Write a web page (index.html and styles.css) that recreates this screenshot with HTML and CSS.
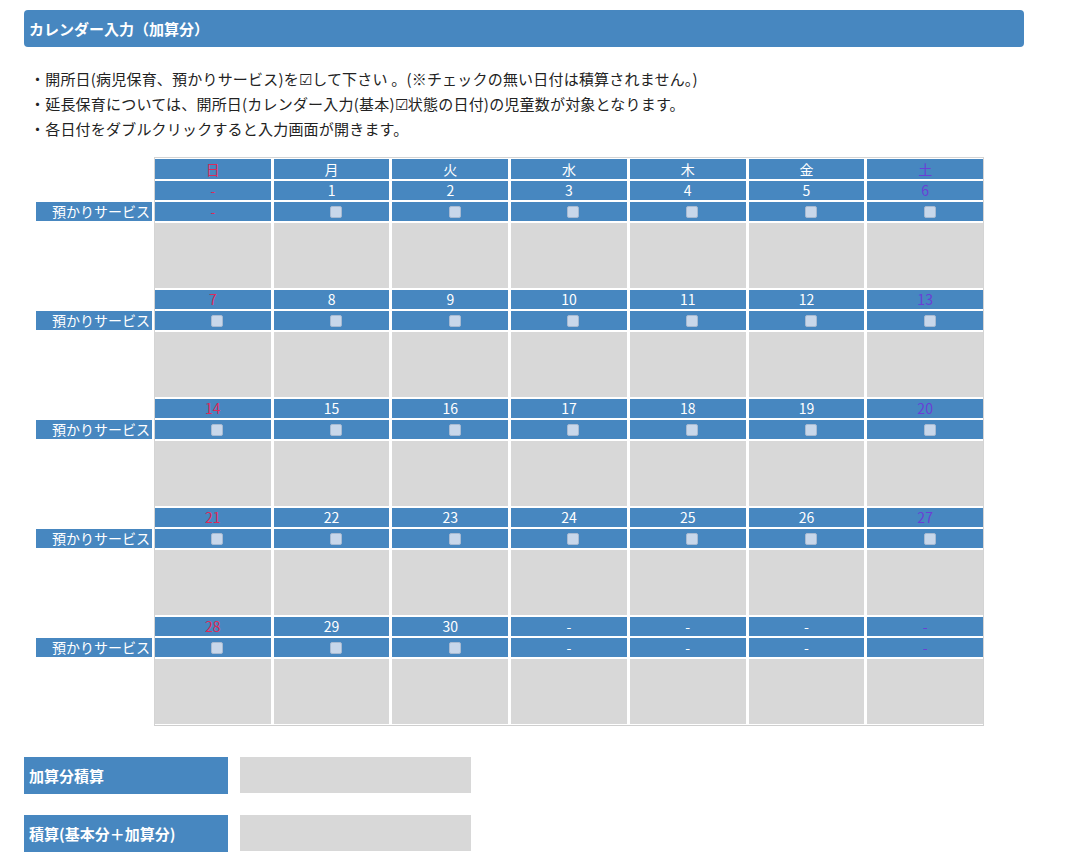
FILE: index.html
```html
<!DOCTYPE html>
<html lang="ja">
<head>
<meta charset="utf-8">
<title>カレンダー入力（加算分）</title>
<link rel="stylesheet" href="styles.css">
</head>
<body>
<div class="page">
  <div class="title">カレンダー入力（加算分）</div>
  <div class="notes">
    <p>・開所日(病児保育、預かりサービス)を☑して下さい 。(※チェックの無い日付は積算されません。)</p>
    <p>・延長保育については、開所日(カレンダー入力(基本)☑状態の日付)の児童数が対象となります。</p>
    <p>・各日付をダブルクリックすると入力画面が開きます。</p>
  </div>
  <div class="cal-wrap">
    <div class="labels">
      <div></div>
      <div></div><div class="lab">預かりサービス</div><div></div>
      <div></div><div class="lab">預かりサービス</div><div></div>
      <div></div><div class="lab">預かりサービス</div><div></div>
      <div></div><div class="lab">預かりサービス</div><div></div>
      <div></div><div class="lab">預かりサービス</div><div></div>
    </div>
    <div class="cal">
      <div class="c sun">日</div><div class="c">月</div><div class="c">火</div><div class="c">水</div><div class="c">木</div><div class="c">金</div><div class="c sat">土</div>

      <div class="c sun">-</div><div class="c">1</div><div class="c">2</div><div class="c">3</div><div class="c">4</div><div class="c">5</div><div class="c sat">6</div>
      <div class="c sun">-</div><div class="c"><span class="cb"></span></div><div class="c"><span class="cb"></span></div><div class="c"><span class="cb"></span></div><div class="c"><span class="cb"></span></div><div class="c"><span class="cb"></span></div><div class="c"><span class="cb"></span></div>
      <div class="g"></div><div class="g"></div><div class="g"></div><div class="g"></div><div class="g"></div><div class="g"></div><div class="g"></div>

      <div class="c sun">7</div><div class="c">8</div><div class="c">9</div><div class="c">10</div><div class="c">11</div><div class="c">12</div><div class="c sat">13</div>
      <div class="c"><span class="cb"></span></div><div class="c"><span class="cb"></span></div><div class="c"><span class="cb"></span></div><div class="c"><span class="cb"></span></div><div class="c"><span class="cb"></span></div><div class="c"><span class="cb"></span></div><div class="c"><span class="cb"></span></div>
      <div class="g"></div><div class="g"></div><div class="g"></div><div class="g"></div><div class="g"></div><div class="g"></div><div class="g"></div>

      <div class="c sun">14</div><div class="c">15</div><div class="c">16</div><div class="c">17</div><div class="c">18</div><div class="c">19</div><div class="c sat">20</div>
      <div class="c"><span class="cb"></span></div><div class="c"><span class="cb"></span></div><div class="c"><span class="cb"></span></div><div class="c"><span class="cb"></span></div><div class="c"><span class="cb"></span></div><div class="c"><span class="cb"></span></div><div class="c"><span class="cb"></span></div>
      <div class="g"></div><div class="g"></div><div class="g"></div><div class="g"></div><div class="g"></div><div class="g"></div><div class="g"></div>

      <div class="c sun">21</div><div class="c">22</div><div class="c">23</div><div class="c">24</div><div class="c">25</div><div class="c">26</div><div class="c sat">27</div>
      <div class="c"><span class="cb"></span></div><div class="c"><span class="cb"></span></div><div class="c"><span class="cb"></span></div><div class="c"><span class="cb"></span></div><div class="c"><span class="cb"></span></div><div class="c"><span class="cb"></span></div><div class="c"><span class="cb"></span></div>
      <div class="g"></div><div class="g"></div><div class="g"></div><div class="g"></div><div class="g"></div><div class="g"></div><div class="g"></div>

      <div class="c sun">28</div><div class="c">29</div><div class="c">30</div><div class="c">-</div><div class="c">-</div><div class="c">-</div><div class="c sat">-</div>
      <div class="c"><span class="cb"></span></div><div class="c"><span class="cb"></span></div><div class="c"><span class="cb"></span></div><div class="c">-</div><div class="c">-</div><div class="c">-</div><div class="c sat">-</div>
      <div class="g"></div><div class="g"></div><div class="g"></div><div class="g"></div><div class="g"></div><div class="g"></div><div class="g"></div>
    </div>
  </div>
  <div class="totals">
    <div class="trow"><div class="tlab">加算分積算</div><div class="tval"></div></div>
    <div class="trow"><div class="tlab">積算(基本分＋加算分)</div><div class="tval"></div></div>
  </div>
</div>
</body>
</html>
```
FILE: styles.css
```css
html, body {
  margin: 0;
  padding: 0;
  background: #ffffff;
}
body {
  font-family: "Noto Sans CJK JP", "Noto Sans", sans-serif;
  color: #333333;
}
.page {
  padding: 10px 0 0 24px;
}
.title {
  width: 1000px;
  height: 37px;
  box-sizing: border-box;
  background: #4787c0;
  border-radius: 4px;
  color: #ffffff;
  font-weight: bold;
  font-size: 15px;
  line-height: 37px;
  padding-left: 5px;
}
.notes {
  margin: 19px 0 0 6px;
  font-size: 15px;
  letter-spacing: 0.2px;
  line-height: 25px;
  color: #222222;
}
.notes p {
  margin: 0;
}
.cal-wrap {
  display: flex;
  margin: 16px 0 0 12px;
  align-items: flex-start;
}
.labels {
  width: 116px;
  margin-right: 2px;
  padding-top: 2px;
  display: grid;
  grid-template-rows: 20px repeat(5, 19px 19px 65px);
  row-gap: 2px;
}
.lab {
  background: #4787c0;
  color: #ffffff;
  font-size: 14px;
  line-height: 19px;
  text-align: right;
  padding-right: 2px;
}
.cal {
  width: 828px;
  border: 1px solid #d4d4d4;
  border-bottom-color: #cfcfcf;
  padding-top: 1px;
  padding-bottom: 1px;
  display: grid;
  grid-template-columns: repeat(7, 1fr);
  grid-template-rows: 20px repeat(5, 19px 19px 65px);
  column-gap: 3px;
  row-gap: 2px;
}
.c {
  background: #4787c0;
  color: #ffffff;
  font-size: 14px;
  line-height: 19px;
  text-align: center;
  display: flex;
  align-items: center;
  justify-content: center;
}
.c.sun {
  color: #dc2a5a;
}
.c.sat {
  color: #6a3fd6;
}
.g {
  background: #d8d8d8;
}
.cb {
  display: inline-block;
  width: 10px;
  height: 10px;
  margin-left: 9px;
  margin-top: 1px;
  background: #c8d7ea;
  border: 1px solid #a7bad2;
  border-radius: 2px;
}
.totals {
  margin-top: 31px;
  display: flex;
  flex-direction: column;
  gap: 21px;
}
.trow {
  display: flex;
  gap: 12px;
}
.tlab {
  width: 204px;
  height: 37px;
  box-sizing: border-box;
  background: #4787c0;
  color: #ffffff;
  font-weight: bold;
  font-size: 15px;
  line-height: 37px;
  padding-left: 5px;
}
.tval {
  width: 231px;
  height: 36px;
  background: #d8d8d8;
}
```
